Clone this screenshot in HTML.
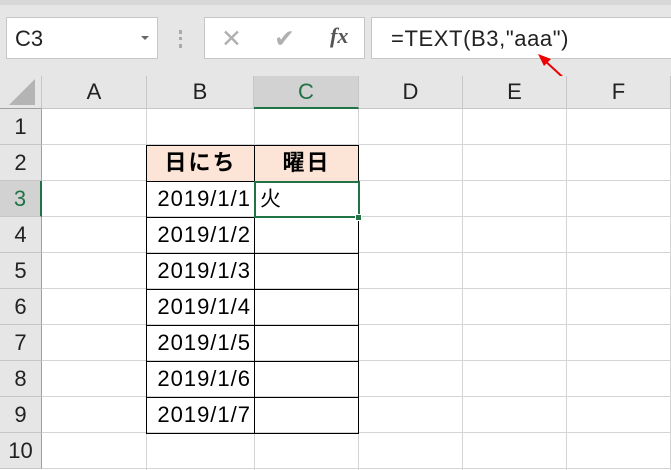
<!DOCTYPE html><html><head><style>
*{margin:0;padding:0;box-sizing:border-box}
body{width:671px;height:470px;overflow:hidden;background:#fff;font-family:"Liberation Sans","Noto Sans CJK JP",sans-serif;position:relative}
.a{position:absolute}
.top{left:0;top:0;width:671px;height:76px;background:#e6e6e6}
.box{background:#fff;border:1px solid #c6c6c6}
.ch{top:76px;height:33px;background:#e6e6e6;border-right:1px solid #c6c6c6;border-bottom:1px solid #c6c6c6;font-size:22px;text-align:center;line-height:32px;color:#222}
.rh{left:0;width:42px;height:36px;background:#e6e6e6;border-bottom:1px solid #c6c6c6;border-right:1px solid #a0a0a0;font-size:22px;text-align:center;line-height:36px;color:#222}
.vl{top:109px;width:1px;height:361px;background:#d4d4d4}
.hl{left:42px;width:629px;height:1px;background:#d4d4d4}
.cell{border:1px solid #000;font-size:22px;line-height:34px}
.n{text-align:right;padding-right:3px;letter-spacing:1px}
</style></head><body>
<div class="a top"></div>
<div class="a" style="left:0;top:0;width:671px;height:5px;background:#d8d8d8"></div>
<div class="a box" style="left:6px;top:17px;width:152px;height:42px;font-size:22px;line-height:42px;padding-left:8px;color:#222">C3</div>
<div class="a" style="left:141px;top:36px;width:0;height:0;border-left:4px solid transparent;border-right:4px solid transparent;border-top:4px solid #666"></div>
<div class="a" style="left:179px;top:30px;width:3px;height:18px;border-left:3px dotted #aaa"></div>
<div class="a box" style="left:204px;top:17px;width:161px;height:42px"></div>
<div class="a" style="left:221px;top:24px;font-size:25px;color:#b0b0b0">✕</div>
<div class="a" style="left:274px;top:24px;font-size:25px;color:#b0b0b0">✔</div>
<div class="a" style="left:330px;top:23px;font-size:22px;color:#555;font-family:'Liberation Serif',serif;font-style:italic;font-weight:bold">fx</div>
<div class="a box" style="left:371px;top:17px;width:310px;height:42px;font-size:22px;line-height:42px;padding-left:19px;color:#222;letter-spacing:0.6px">=TEXT(B3,"aaa")</div>
<svg class="a" style="left:535px;top:52px" width="40" height="36"><line x1="33" y1="30" x2="8" y2="7" stroke="#e00" stroke-width="2"/><polygon points="3,2 16,7 9,14" fill="#e00"/></svg>
<div class="a" style="left:0;top:76px;width:42px;height:33px;background:#e6e6e6;border-right:1px solid #c6c6c6;border-bottom:1px solid #a0a0a0"></div>
<div class="a" style="left:9px;top:79px;width:0;height:0;border-left:26px solid transparent;border-bottom:26px solid #b4b4b4"></div>
<div class="a ch" style="left:42px;width:105px">A</div>
<div class="a ch" style="left:147px;width:107px">B</div>
<div class="a ch" style="left:254px;width:105px;background:#d2d2d2;border-bottom:2px solid #217346;color:#217346">C</div>
<div class="a ch" style="left:359px;width:104px">D</div>
<div class="a ch" style="left:463px;width:104px">E</div>
<div class="a ch" style="left:567px;width:104px">F</div>
<div class="a rh" style="top:109px">1</div>
<div class="a rh" style="top:145px">2</div>
<div class="a rh" style="top:181px;background:#d2d2d2;border-right:2px solid #217346;color:#217346">3</div>
<div class="a rh" style="top:217px">4</div>
<div class="a rh" style="top:253px">5</div>
<div class="a rh" style="top:289px">6</div>
<div class="a rh" style="top:325px">7</div>
<div class="a rh" style="top:361px">8</div>
<div class="a rh" style="top:397px">9</div>
<div class="a rh" style="top:433px">10</div>
<div class="a vl" style="left:146px"></div><div class="a vl" style="left:254px"></div><div class="a vl" style="left:358px"></div><div class="a vl" style="left:462px"></div><div class="a vl" style="left:566px"></div><div class="a vl" style="left:670px"></div>
<div class="a hl" style="top:144px"></div><div class="a hl" style="top:180px"></div><div class="a hl" style="top:216px"></div><div class="a hl" style="top:252px"></div><div class="a hl" style="top:288px"></div><div class="a hl" style="top:324px"></div><div class="a hl" style="top:360px"></div><div class="a hl" style="top:396px"></div><div class="a hl" style="top:432px"></div><div class="a hl" style="top:468px"></div>
<div class="a cell" style="left:146px;top:145px;width:109px;height:37px;background:#fce4d6;text-align:center;font-weight:bold;letter-spacing:2px">日にち</div>
<div class="a cell" style="left:254px;top:145px;width:105px;height:37px;background:#fce4d6;text-align:center;font-weight:bold;letter-spacing:2px">曜日</div>
<div class="a cell n" style="left:146px;top:181px;width:109px;height:37px">2019/1/1</div>
<div class="a cell n" style="left:146px;top:217px;width:109px;height:37px">2019/1/2</div>
<div class="a cell n" style="left:146px;top:253px;width:109px;height:37px">2019/1/3</div>
<div class="a cell n" style="left:146px;top:289px;width:109px;height:37px">2019/1/4</div>
<div class="a cell n" style="left:146px;top:325px;width:109px;height:37px">2019/1/5</div>
<div class="a cell n" style="left:146px;top:361px;width:109px;height:37px">2019/1/6</div>
<div class="a cell n" style="left:146px;top:397px;width:109px;height:37px">2019/1/7</div>
<div class="a cell" style="left:254px;top:217px;width:105px;height:37px"></div>
<div class="a cell" style="left:254px;top:253px;width:105px;height:37px"></div>
<div class="a cell" style="left:254px;top:289px;width:105px;height:37px"></div>
<div class="a cell" style="left:254px;top:325px;width:105px;height:37px"></div>
<div class="a cell" style="left:254px;top:361px;width:105px;height:37px"></div>
<div class="a cell" style="left:254px;top:397px;width:105px;height:37px"></div>
<div class="a" style="left:254px;top:181px;width:106px;height:37px;border:2px solid #217346;font-size:21px;line-height:33px;padding-left:4px">火</div>
<div class="a" style="left:355px;top:214px;width:7px;height:7px;background:#217346;border:1px solid #fff"></div>
</body></html>
